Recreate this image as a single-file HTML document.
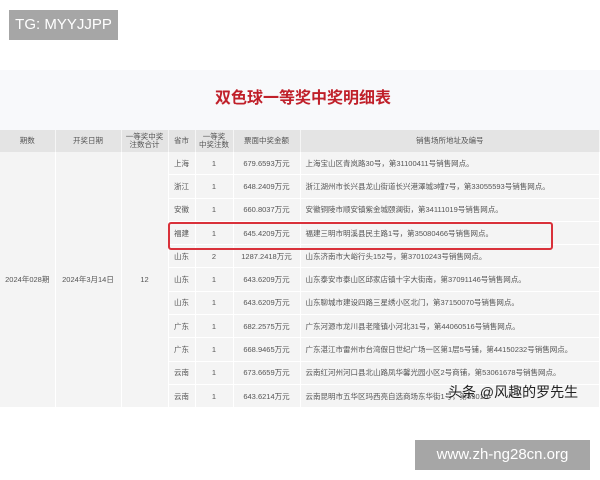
<!DOCTYPE html><html><head><meta charset="utf-8"><style>
body{margin:0;width:600px;height:480px;background:#fff;position:relative;overflow:hidden;font-family:"Liberation Sans","Noto Sans CJK SC",sans-serif}
.tg{position:absolute;left:9px;top:10px;width:109px;height:30px;background:#a6a6a6;color:#fff;font-size:15px;line-height:30px;text-align:center}
.panel{position:absolute;left:0;top:70px;width:600px;height:338px;background:#f8f9fb}
.title{position:absolute;left:0;top:84px;width:600px;text-align:center;color:#c0202a;font-weight:bold;font-size:16px;padding-left:6px;box-sizing:border-box}
table{position:absolute;left:0;top:130px;border-collapse:collapse;table-layout:fixed;width:600px;font-size:7.5px;color:#555}
th{background:#e4e4e4;height:22px;font-weight:normal;border-right:1px solid #f5f5f5;line-height:8px;padding:0}
td{height:22.3px;padding:0;text-align:center;border-right:1px solid #fff;border-bottom:1px solid #fff;background:#f4f4f4}
td.a{text-align:left;padding-left:5px}
.hl{position:absolute;left:168px;top:222px;width:381px;height:24px;border:2px solid #d9313a;border-radius:3px}
.wm{position:absolute;left:448px;top:382px;font-size:14px;color:#222}
.url{position:absolute;left:415px;top:440px;width:175px;height:30px;background:#a6a6a6;color:#fff;font-size:15px;line-height:30px;text-align:center}
</style></head><body>
<div class="tg">TG: MYYJJPP</div>
<div class="panel"></div>
<div class="title">双色球一等奖中奖明细表</div>
<table>
<colgroup><col style="width:55px"><col style="width:66px"><col style="width:47px"><col style="width:27px"><col style="width:38px"><col style="width:67px"><col></colgroup>
<tr><th>期数</th><th>开奖日期</th><th>一等奖中奖<br>注数合计</th><th>省市</th><th>一等奖<br>中奖注数</th><th>票面中奖金额</th><th>销售场所地址及编号</th></tr>
<tr><td rowspan="11">2024年028期</td><td rowspan="11">2024年3月14日</td><td rowspan="11">12</td><td>上海</td><td>1</td><td>679.6593万元</td><td class="a">上海宝山区青岚路30号，第31100411号销售网点。</td></tr>
<tr><td>浙江</td><td>1</td><td>648.2409万元</td><td class="a">浙江湖州市长兴县龙山街道长兴港澤城3幢7号，第33055593号销售网点。</td></tr>
<tr><td>安徽</td><td>1</td><td>660.8037万元</td><td class="a">安徽铜陵市顺安镇紫金城颐澜街，第34111019号销售网点。</td></tr>
<tr><td>福建</td><td>1</td><td>645.4209万元</td><td class="a">福建三明市明溪县民主路1号，第35080466号销售网点。</td></tr>
<tr><td>山东</td><td>2</td><td>1287.2418万元</td><td class="a">山东济南市大峪行头152号，第37010243号销售网点。</td></tr>
<tr><td>山东</td><td>1</td><td>643.6209万元</td><td class="a">山东泰安市泰山区邱家店镇十字大街南，第37091146号销售网点。</td></tr>
<tr><td>山东</td><td>1</td><td>643.6209万元</td><td class="a">山东聊城市建设四路三星绣小区北门，第37150070号销售网点。</td></tr>
<tr><td>广东</td><td>1</td><td>682.2575万元</td><td class="a">广东河源市龙川县老隆镇小河北31号，第44060516号销售网点。</td></tr>
<tr><td>广东</td><td>1</td><td>668.9465万元</td><td class="a">广东湛江市雷州市台湾假日世纪广场一区第1层5号铺，第44150232号销售网点。</td></tr>
<tr><td>云南</td><td>1</td><td>673.6659万元</td><td class="a">云南红河州河口县北山路凤华馨光园小区2号商铺，第53061678号销售网点。</td></tr>
<tr><td>云南</td><td>1</td><td>643.6214万元</td><td class="a">云南昆明市五华区玛西亮自选商场东华街1号，第53010</td></tr>
</table>
<div class="hl"></div>
<div class="wm">头条 @风趣的罗先生</div>
<div class="url">www.zh-ng28cn.org</div>
</body></html>
